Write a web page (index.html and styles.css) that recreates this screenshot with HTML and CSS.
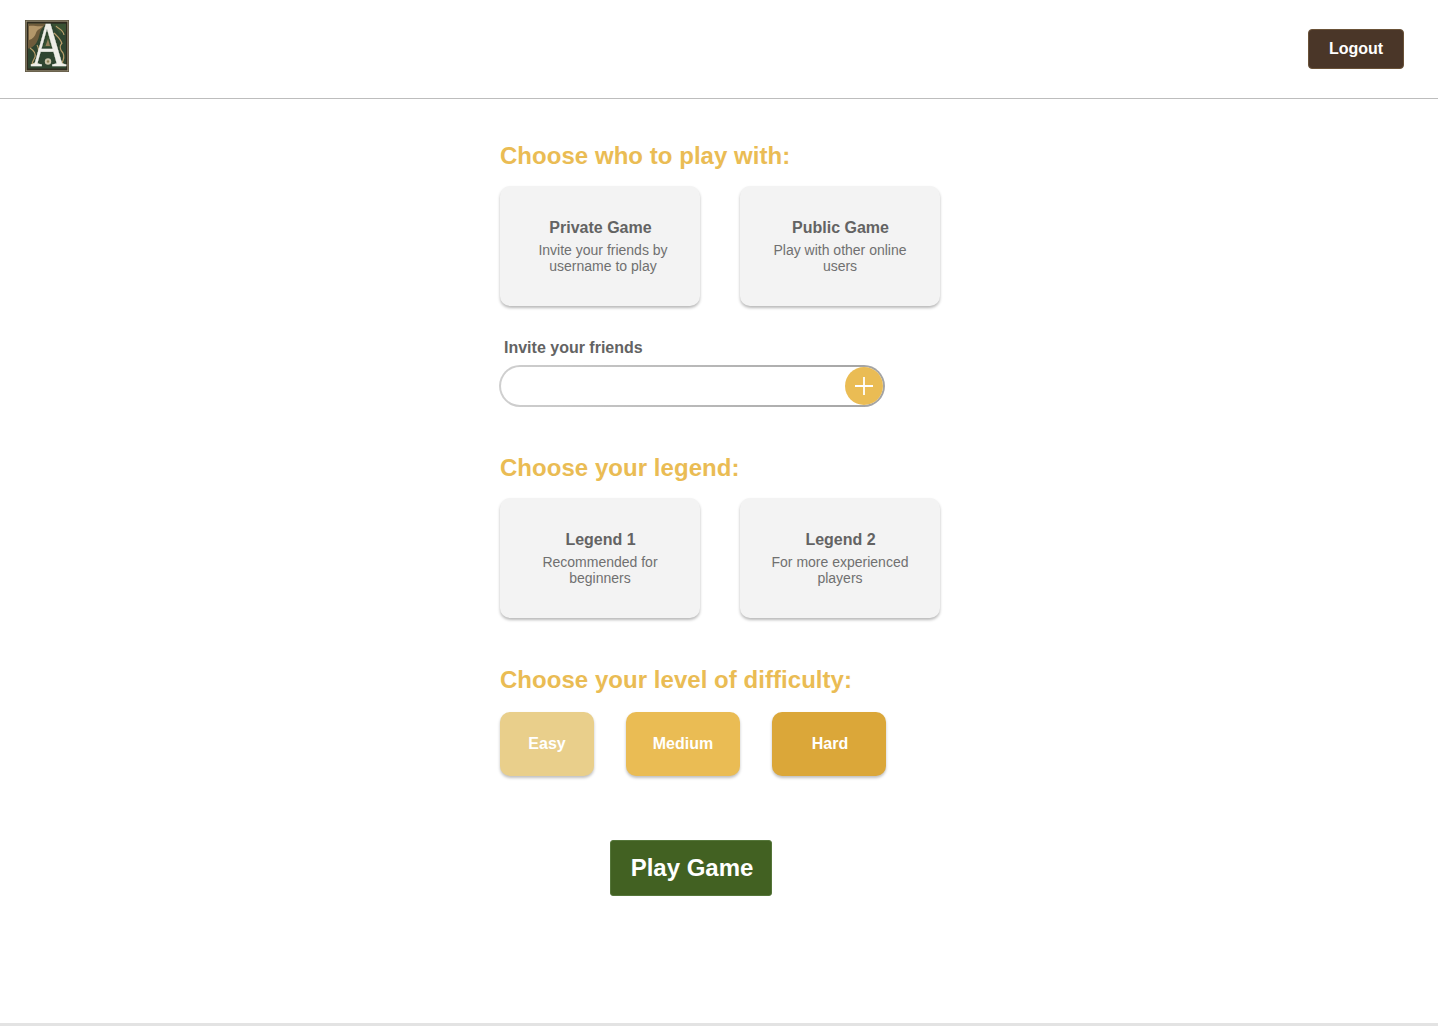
FILE: index.html
```html
<!DOCTYPE html>
<html lang="en">
<head>
<meta charset="utf-8">
<title>Play</title>
<link rel="stylesheet" href="styles.css">
</head>
<body>
<header class="topbar">
  <svg class="logo" viewBox="0 0 44 52" width="44" height="52" aria-label="Logo">
    <rect width="44" height="52" fill="#5d5643"/>
    <rect x="0.8" y="0.8" width="42.4" height="50.4" fill="#a89f82"/>
    <rect x="1.6" y="1.6" width="40.8" height="48.8" fill="#2e2a1e"/>
    <rect x="3" y="3.5" width="38" height="45" fill="#2f4530"/>
    <path d="M3 3.5h18c-2 3-5 5-6 9-1 4-2 8-4 11-2 3-6 5-8 5z" fill="#6f5c3c"/>
    <path d="M4 6c4-1 9 1 14 0-2 3-6 3-7 7-1 3-3 6-7 7z" fill="#b3976a"/>
    <path d="M27 4h14v8c-3-2-5 0-6 3-1-4-5-7-8-11z" fill="#3a5233"/>
    <path d="M31 6c2 3 7 3 8 9M29 13c3 3 7 6 8 11M37 23c-3 3-2 7 1 10 1 2 1 6-1 10M5 28c3 2 6 5 5 9-1 3-3 4-3 8M12 25c2 3 2 6 1 10M29 40c3-1 6 0 9 4M6 45c3-2 6-3 9-1" stroke="#b79d6a" stroke-width="1.2" fill="none"/>
    <path d="M18 27l5-13 4 13z" fill="#3a5433"/>
    <path d="M20.500 26l2.500-7 2 7z" fill="#94805a"/>
    <path d="M15 35h15l3 10H12z" fill="#2f4530"/>
    <circle cx="23" cy="41.500" r="3.200" fill="#c9c3a8"/>
    <circle cx="23" cy="41.500" r="1.200" fill="#8a7f52"/>
    <text class="logo-letter" text-anchor="middle" transform="translate(23.500 46) scale(0.86 1.08)">A</text>
  </svg>
  <button class="logout">Logout</button>
</header>

<main class="content">
  <h2 class="heading">Choose who to play with:</h2>
  <div class="cards">
    <div class="card">
      <h3 class="card-title">Private Game</h3>
      <p class="card-text card-text-shift">Invite your friends by username to play</p>
    </div>
    <div class="card">
      <h3 class="card-title">Public Game</h3>
      <p class="card-text">Play with other online users</p>
    </div>
  </div>

  <label class="invite-label" for="invite">Invite your friends</label>
  <div class="invite-field">
    <input class="invite-input" id="invite" type="text">
    <button class="invite-add" aria-label="Add">
      <svg viewBox="0 0 18 18" width="18" height="18"><path d="M9 0v18M0 9h18" stroke="#fff" stroke-width="1.8" fill="none"/></svg>
    </button>
  </div>

  <h2 class="heading heading-legend">Choose your legend:</h2>
  <div class="cards">
    <div class="card">
      <h3 class="card-title">Legend 1</h3>
      <p class="card-text">Recommended for beginners</p>
    </div>
    <div class="card">
      <h3 class="card-title">Legend 2</h3>
      <p class="card-text">For more experienced players</p>
    </div>
  </div>

  <h2 class="heading heading-level">Choose your level of difficulty:</h2>
  <div class="levels">
    <button class="level level-easy">Easy</button>
    <button class="level level-medium">Medium</button>
    <button class="level level-hard">Hard</button>
  </div>

  <div class="play-row"><button class="play">Play Game</button></div>
</main>
<div class="bottom-line"></div>
</body>
</html>
```
FILE: styles.css
```css
* { box-sizing: border-box; }
html, body { margin: 0; height: 100%; }
body {
  height: 1026px;
  overflow: hidden;
  display: flex;
  flex-direction: column;
  background: #fff;
  font-family: "Liberation Sans", Arial, sans-serif;
  color: #636363;
}
.topbar {
  height: 99px;
  flex: none;
  border-bottom: 1px solid #bdbdbd;
  padding: 20px 34px 0 25px;
  display: flex;
  justify-content: space-between;
  align-items: flex-start;
}
.logo { display: block; overflow: visible; }
.logo-letter {
  font-family: "Liberation Serif", serif;
  font-size: 58px;
  fill: #eeeee8;
  stroke: #eeeee8;
  stroke-width: 0.3px;
}
.logout {
  margin-top: 9px;
  width: 96px;
  height: 40px;
  border: 1px solid #6a5238;
  border-radius: 4px;
  background: #4a3628;
  color: #fff;
  font: bold 16px "Liberation Sans", Arial, sans-serif;
}
.content {
  flex: 1;
  width: 440px;
  margin-left: 500px;
  padding-top: 43px;
}
.heading {
  margin: 0;
  height: 28px;
  line-height: 28px;
  font-size: 24px;
  font-weight: bold;
  color: #eabc54;
  letter-spacing: 0.04px;
}
.heading-legend { margin-top: 47px; }
.heading-level { margin-top: 48px; }
.cards {
  display: flex;
  gap: 40px;
  margin-top: 16px;
}
.card {
  width: 200px;
  height: 120px;
  padding: 33px 24px 0;
  border-radius: 10px;
  background: #f3f3f3;
  box-shadow: 0 2px 3px rgba(0, 0, 0, 0.28);
  text-align: center;
}
.card-title {
  margin: 0 0 5px;
  padding-left: 1px;
  font-size: 16px;
  line-height: 18px;
  font-weight: bold;
  color: #636363;
}
.card-text {
  margin: 0;
  font-size: 14px;
  line-height: 16px;
  color: #707070;
}
.card-text-shift { padding-left: 6px; }
.invite-label {
  display: block;
  margin: 33px 0 8px 4px;
  height: 18px;
  line-height: 18px;
  font-size: 16px;
  font-weight: bold;
  color: #636363;
}
.invite-field {
  width: 386px;
  height: 42px;
  margin-left: -1px;
  padding: 2px;
  border-radius: 21px;
  background: linear-gradient(90deg, #cfcfcf, #a3a3a3);
  display: flex;
  justify-content: flex-end;
  position: relative;
}
.invite-input {
  position: absolute;
  left: 2px;
  top: 2px;
  width: 382px;
  height: 38px;
  border: 0;
  border-radius: 19px;
  background: #fff;
}
.invite-add {
  position: relative;
  width: 38px;
  height: 38px;
  padding: 0;
  border: 0;
  border-radius: 50%;
  background: #eabc54;
  display: flex;
  align-items: center;
  justify-content: center;
}
.levels {
  display: flex;
  gap: 32px;
  margin-top: 18px;
}
.level {
  height: 64px;
  width: 114px;
  border: 0;
  border-radius: 10px;
  color: #fff;
  font: bold 16px "Liberation Sans", Arial, sans-serif;
  box-shadow: 0 2px 3px rgba(0, 0, 0, 0.25);
}
.level-easy { width: 94px; background: #e9cf8b; }
.level-medium { background: #eabc54; }
.level-hard { background: #dba739; padding-left: 8px; }
.play-row {
  margin-top: 64px;
  padding-left: 110px;
}
.play {
  width: 162px;
  height: 56px;
  padding-left: 8px;
  border: 1px solid #55763a;
  border-radius: 3px;
  background: #426122;
  color: #fff;
  font: bold 24px "Liberation Sans", Arial, sans-serif;
}
.bottom-line {
  height: 3px;
  flex: none;
  background: #e3e3e3;
}
```
